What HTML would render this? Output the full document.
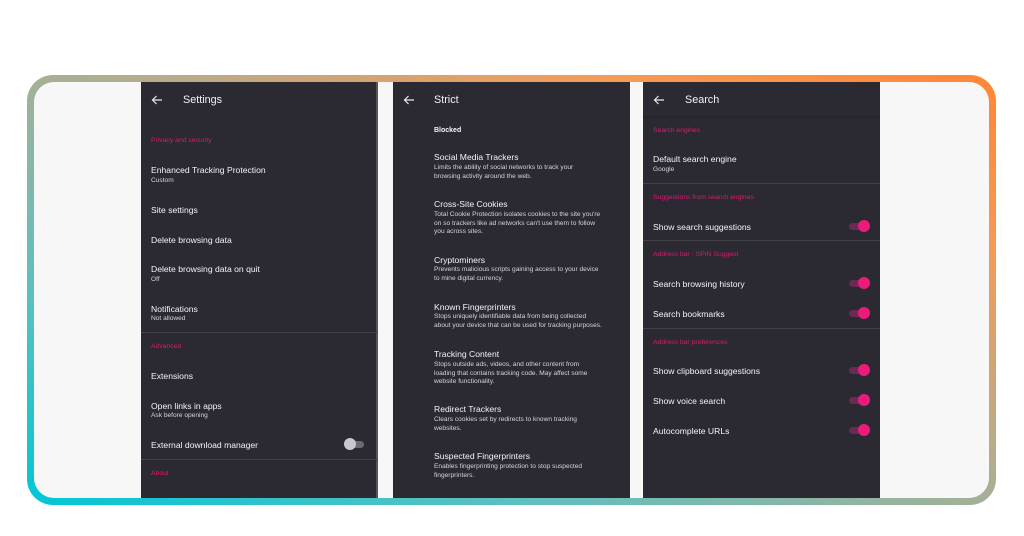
<!DOCTYPE html>
<html><head><meta charset="utf-8"><style>
*{margin:0;padding:0;box-sizing:border-box}
body{width:1024px;height:536px;background:#fff;position:relative;overflow:hidden;font-family:"Liberation Sans",sans-serif}
.frame{position:absolute;left:27px;top:75px;width:969px;height:430px;border-radius:26px;background:linear-gradient(to top right,#00c6d6 0%,#5cc0c0 25%,#b3ad8e 55%,#f59a55 80%,#ff8536 100%)}
.inner{position:absolute;left:34px;top:82px;width:955px;height:416px;border-radius:20px;background:#f7f7f7}
.p{position:absolute;top:82px;height:416px;width:237px;background:#2b2a33}
.p1{left:141px;border-right:2px solid #55545a}
.p2{left:393px}
.p3{left:643px}
.t{position:absolute;color:#f4f4f6;font-size:8.6px;line-height:10px;white-space:nowrap;margin-top:1px}
.s{position:absolute;color:#d4d4da;font-size:6.6px;line-height:8.6px;white-space:nowrap;margin-top:1px}
.c{position:absolute;color:#e0156f;font-size:6.8px;line-height:8px;white-space:nowrap;margin-top:1px}
.h{position:absolute;color:#f2f2f4;font-size:10.8px;line-height:12px}
.d{position:absolute;height:1px;background:#43424a;width:237px}
.tg{position:absolute;width:21px;height:12px}
.tg:before{content:"";position:absolute;left:0;top:2.5px;width:16px;height:7px;border-radius:4px;background:#6b2a52}
.tg:after{content:"";position:absolute;left:9px;top:0;width:12px;height:12px;border-radius:50%;background:#ec1b7a}
.off:before{background:#6a6a70;left:4px}
.off:after{left:0;background:#c8c8cc}
svg{position:absolute}
</style></head><body>
<div class="frame"></div><div class="inner"></div>

<div class="p p1">
<svg style="left:10px;top:13px" width="12" height="10" viewBox="0 0 12 10"><path d="M11 5H1.5M5.5 1L1.5 5l4 4" stroke="#e8e8ec" stroke-width="1.2" fill="none"/></svg>
<div class="h" style="left:42px;top:12px">Settings</div>
<div class="c" style="left:10px;top:54px">Privacy and security</div>
<div class="t" style="left:10px;top:82px">Enhanced Tracking Protection</div>
<div class="s" style="left:10px;top:94px">Custom</div>
<div class="t" style="left:10px;top:122px">Site settings</div>
<div class="t" style="left:10px;top:152px">Delete browsing data</div>
<div class="t" style="left:10px;top:181px">Delete browsing data on quit</div>
<div class="s" style="left:10px;top:193px">Off</div>
<div class="t" style="left:10px;top:221px">Notifications</div>
<div class="s" style="left:10px;top:232px">Not allowed</div>
<div class="d" style="left:0;top:250px"></div>
<div class="c" style="left:10px;top:260px">Advanced</div>
<div class="t" style="left:10px;top:288px">Extensions</div>
<div class="t" style="left:10px;top:318px">Open links in apps</div>
<div class="s" style="left:10px;top:329px">Ask before opening</div>
<div class="t" style="left:10px;top:357px">External download manager</div>
<div class="tg off" style="left:203px;top:356px"></div>
<div class="d" style="left:0;top:377px"></div>
<div class="c" style="left:10px;top:387px">About</div>
</div>

<div class="p p2">
<svg style="left:10px;top:13px" width="12" height="10" viewBox="0 0 12 10"><path d="M11 5H1.5M5.5 1L1.5 5l4 4" stroke="#e8e8ec" stroke-width="1.2" fill="none"/></svg>
<div class="h" style="left:41px;top:12px">Strict</div>
<div class="t" style="left:41px;top:43px;font-size:7px;font-weight:bold">Blocked</div>
<div class="t" style="left:41px;top:69px">Social Media Trackers</div>
<div class="s" style="left:41px;top:81px">Limits the ability of social networks to track your<br>browsing activity around the web.</div>
<div class="t" style="left:41px;top:116px">Cross-Site Cookies</div>
<div class="s" style="left:41px;top:128px">Total Cookie Protection isolates cookies to the site you're<br>on so trackers like ad networks can't use them to follow<br>you across sites.</div>
<div class="t" style="left:41px;top:172px">Cryptominers</div>
<div class="s" style="left:41px;top:183px">Prevents malicious scripts gaining access to your device<br>to mine digital currency.</div>
<div class="t" style="left:41px;top:219px">Known Fingerprinters</div>
<div class="s" style="left:41px;top:230px">Stops uniquely identifiable data from being collected<br>about your device that can be used for tracking purposes.</div>
<div class="t" style="left:41px;top:266px">Tracking Content</div>
<div class="s" style="left:41px;top:278px">Stops outside ads, videos, and other content from<br>loading that contains tracking code. May affect some<br>website functionality.</div>
<div class="t" style="left:41px;top:321px">Redirect Trackers</div>
<div class="s" style="left:41px;top:333px">Clears cookies set by redirects to known tracking<br>websites.</div>
<div class="t" style="left:41px;top:368px">Suspected Fingerprinters</div>
<div class="s" style="left:41px;top:380px">Enables fingerprinting protection to stop suspected<br>fingerprinters.</div>
</div>

<div class="p p3">
<svg style="left:10px;top:13px" width="12" height="10" viewBox="0 0 12 10"><path d="M11 5H1.5M5.5 1L1.5 5l4 4" stroke="#e8e8ec" stroke-width="1.2" fill="none"/></svg>
<div class="h" style="left:42px;top:12px">Search</div>
<div style="position:absolute;left:0;top:34px;width:237px;height:4px;background:linear-gradient(#242329,#2b2a33)"></div>
<div class="c" style="left:10px;top:44px">Search engines</div>
<div class="t" style="left:10px;top:71px">Default search engine</div>
<div class="s" style="left:10px;top:83px">Google</div>
<div class="d" style="left:0;top:101px"></div>
<div class="c" style="left:10px;top:111px">Suggestions from search engines</div>
<div class="t" style="left:10px;top:139px">Show search suggestions</div>
<div class="tg" style="left:206px;top:138px"></div>
<div class="d" style="left:0;top:158px"></div>
<div class="c" style="left:10px;top:168px">Address bar - SPIN Suggest</div>
<div class="t" style="left:10px;top:196px">Search browsing history</div>
<div class="tg" style="left:206px;top:195px"></div>
<div class="t" style="left:10px;top:226px">Search bookmarks</div>
<div class="tg" style="left:206px;top:225px"></div>
<div class="d" style="left:0;top:246px"></div>
<div class="c" style="left:10px;top:256px">Address bar preferences</div>
<div class="t" style="left:10px;top:283px">Show clipboard suggestions</div>
<div class="tg" style="left:206px;top:282px"></div>
<div class="t" style="left:10px;top:313px">Show voice search</div>
<div class="tg" style="left:206px;top:312px"></div>
<div class="t" style="left:10px;top:343px">Autocomplete URLs</div>
<div class="tg" style="left:206px;top:342px"></div>
</div>
</body></html>
